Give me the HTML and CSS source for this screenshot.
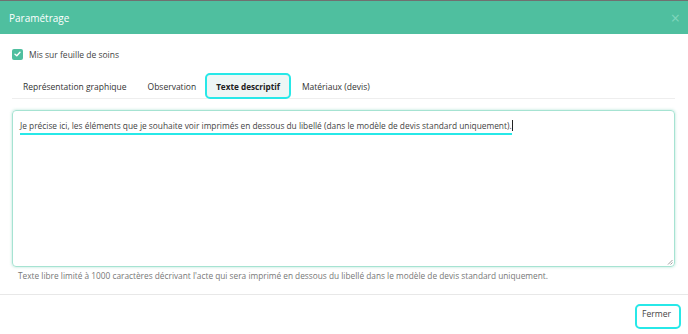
FILE: index.html
```html
<!DOCTYPE html>
<html lang="fr">
<head>
    <meta charset="UTF-8">
    <title>Paramétrage</title>
    <link rel="stylesheet" href="styles.css">
</head>
<body>
    <div class="modal">
        <div class="modal-header">
            <span class="modal-title">Paramétrage</span>
            <span class="close">&times;</span>
        </div>
        <div class="modal-body">
            <label class="check-row">
                <span class="checkbox">
                    <svg width="7" height="6" viewBox="0 0 7 6"><path d="M1 3.2 L2.8 4.8 L6 1.2" fill="none" stroke="#fff" stroke-width="1.4" stroke-linecap="round" stroke-linejoin="round"/></svg>
                </span>
                Mis sur feuille de soins
            </label>
            <div class="tabs">
                <span class="tab">Représentation graphique</span>
                <span class="tab">Observation</span>
                <span class="tab active">Texte descriptif</span>
                <span class="tab">Matériaux (devis)</span>
            </div>
            <div class="textarea">
                <span class="typed">Je précise ici, les éléments que je souhaite voir imprimés en dessous du libellé (dans le modèle de devis standard uniquement).</span><span class="caret"></span>
                <svg class="grip" width="6" height="6" viewBox="0 0 6 6"><path d="M5.5 1 L1 5.5 M5.5 3.5 L3.5 5.5" stroke="#888" stroke-width="0.8"/></svg>
            </div>
            <p class="help">Texte libre limité à 1000 caractères décrivant l'acte qui sera imprimé en dessous du libellé dans le modèle de devis standard uniquement.</p>
        </div>
        <div class="modal-footer">
            <button class="btn-close">Fermer</button>
        </div>
    </div>
</body>
</html>
```

FILE: styles.css
```css
body {
    margin: 0;
    font-family: "Open Sans", Arial, sans-serif;
    background-color: #fff;
    color: #444;
}
.modal {
    width: 688px;
    height: 334px;
    overflow: hidden;
}
.modal-header {
    height: 33px;
    border-top: 1px solid #707070;
    background-color: #4fbf9f;
    display: flex;
    justify-content: space-between;
    align-items: center;
    padding: 0 9px;
    color: #fff;
}
.modal-title {
    font-size: 10px;
}
.close {
    font-size: 16px;
    color: #7fd6bc;
    margin-right: -1px;
}
.modal-body {
    padding: 14px 13px 0 12px;
}
.check-row {
    display: flex;
    align-items: center;
    gap: 6px;
    font-size: 8.5px;
    color: #444;
    height: 12px;
}
.checkbox {
    width: 11px;
    height: 11px;
    border-radius: 2px;
    background-color: #4fbf9f;
    display: flex;
    align-items: center;
    justify-content: center;
}
.tabs {
    margin-top: 14px;
    display: flex;
    border-bottom: 1px solid #eee;
    height: 24px;
    align-items: stretch;
}
.tab {
    font-size: 8.5px;
    color: #333;
    padding: 0 10px 0 11px;
    display: flex;
    align-items: center;
}
.tab.active {
    font-weight: bold;
    font-size: 8.2px;
    color: #222;
    background-color: #eef6f5;
    border: 2px solid #27e8e8;
    border-radius: 5px;
    padding: 0 9px;
    margin: -1px 0 -1px -1px;
}
.textarea {
    position: relative;
    margin-top: 11px;
    height: 138px;
    border: 1px solid #a6e3d2;
    border-radius: 4px;
    box-shadow: 0 0 3px rgba(79, 191, 159, 0.45);
    padding: 9px 8px 8px 7px;
    font-size: 8.35px;
    color: #444;
}
.typed {
    border-bottom: 2px solid #27e8e8;
    padding-bottom: 2px;
}
.caret {
    display: inline-block;
    width: 1px;
    height: 11px;
    background-color: #222;
    vertical-align: -2px;
}
.grip {
    position: absolute;
    right: 1px;
    bottom: 1px;
}
.help {
    margin: 3px 0 0 6px;
    font-size: 8.3px;
    color: #777;
}
.modal-footer {
    margin-top: 13px;
    border-top: 1px solid #e8e8e8;
    display: flex;
    justify-content: flex-end;
    padding: 9px 7px 0 0;
}
.btn-close {
    font-family: inherit;
    font-size: 8.6px;
    color: #444;
    background: #fff;
    border: 2px solid #27e8e8;
    border-radius: 5px;
    padding: 0 5px 6px 5px;
    width: 46px;
    height: 25px;
    text-align: left;
    cursor: pointer;
}
```
